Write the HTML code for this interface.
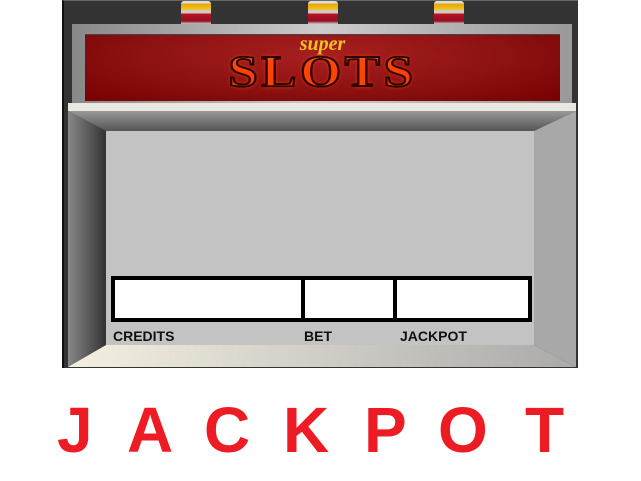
<!DOCTYPE html>
<html><head><style>
body{margin:0;width:641px;height:481px;background:#fff;position:relative;overflow:hidden;font-family:"Liberation Sans",sans-serif}
.a{position:absolute}
.cap{position:absolute;top:1px;width:30px;height:23px;background:linear-gradient(#ddd 0,#ddd 2px,#e8a800 3px,#f0c020 8px,#ccc 10px,#ccc 12px,#c01020 13px,#901020 20px,#ccc 23px);border-radius:3px 3px 0 0}
.L{position:absolute;top:395px;font-size:64px;font-weight:bold;color:#ed1c24;line-height:70px}
.lab{position:absolute;top:328px;font-size:14px;font-weight:bold;color:#111}
</style></head><body>
<div class="a" style="left:62px;top:0;width:514px;height:367px;background:#333;border-left:2px solid #111;border-top:1px solid #666"></div>
<div class="cap" style="left:181px"></div>
<div class="cap" style="left:308px"></div>
<div class="cap" style="left:434px"></div>
<div class="a" style="left:72px;top:24px;width:500px;height:80px;background:linear-gradient(90deg,#888,#ccc 50%,#999)"></div>
<div class="a" style="left:85px;top:34px;width:475px;height:66px;background:radial-gradient(ellipse at 50% 30%,#a82020,#8a1010 60%,#700);border-top:1px solid #444"></div>
<div class="a" style="left:85px;top:34px;width:475px;height:66px;text-align:center">
<div style="font-family:'Liberation Serif',serif;font-style:italic;font-weight:bold;color:#f4c020;font-size:20px;line-height:18px;margin-top:1px">super</div>
<div style="display:inline-block;font-family:'Liberation Serif',serif;font-weight:bold;font-size:44px;line-height:38px;color:#f05818;letter-spacing:3px;-webkit-text-stroke:2px #300;text-shadow:0 0 4px #f40;transform:scaleX(1.2);background:linear-gradient(#f4a030,#e83010 60%,#f07020);-webkit-background-clip:text;-webkit-text-fill-color:transparent">SLOTS</div>
</div>
<svg class="a" style="left:68px;top:103px" width="508" height="264">
<defs>
<linearGradient id="t" x1="0" y1="0" x2="0" y2="1"><stop offset="0" stop-color="#999"/><stop offset="1" stop-color="#555"/></linearGradient>
<linearGradient id="l" x1="0" y1="0" x2="1" y2="0"><stop offset="0" stop-color="#888"/><stop offset="1" stop-color="#333"/></linearGradient>
<linearGradient id="b" x1="0" y1="0" x2="1" y2="0"><stop offset="0" stop-color="#f4f0e0"/><stop offset="1" stop-color="#aaa"/></linearGradient>
</defs>
<rect width="508" height="8" fill="#e8e8e0"/>
<polygon points="0,8 508,8 466,28 38,28" fill="url(#t)"/>
<polygon points="0,8 38,28 38,242 0,264" fill="url(#l)"/>
<polygon points="508,8 466,28 466,242 508,264" fill="#a8a8a8"/>
<polygon points="38,242 466,242 508,264 0,264" fill="url(#b)"/>
<rect x="38" y="28" width="428" height="214" fill="#c3c3c3"/>
</svg>
<div class="a" style="left:111px;top:276px;width:413px;height:38px;border:4px solid #000;background:#fff"></div>
<div class="a" style="left:301px;top:276px;width:4px;height:46px;background:#000"></div>
<div class="a" style="left:393px;top:276px;width:4px;height:46px;background:#000"></div>
<div class="lab" style="left:113px">CREDITS</div>
<div class="lab" style="left:304px">BET</div>
<div class="lab" style="left:400px">JACKPOT</div>
<div class="L" style="left:57px">J</div>
<div class="L" style="left:127px">A</div>
<div class="L" style="left:204px">C</div>
<div class="L" style="left:283px">K</div>
<div class="L" style="left:364px">P</div>
<div class="L" style="left:438px">O</div>
<div class="L" style="left:525px">T</div>
</body></html>
